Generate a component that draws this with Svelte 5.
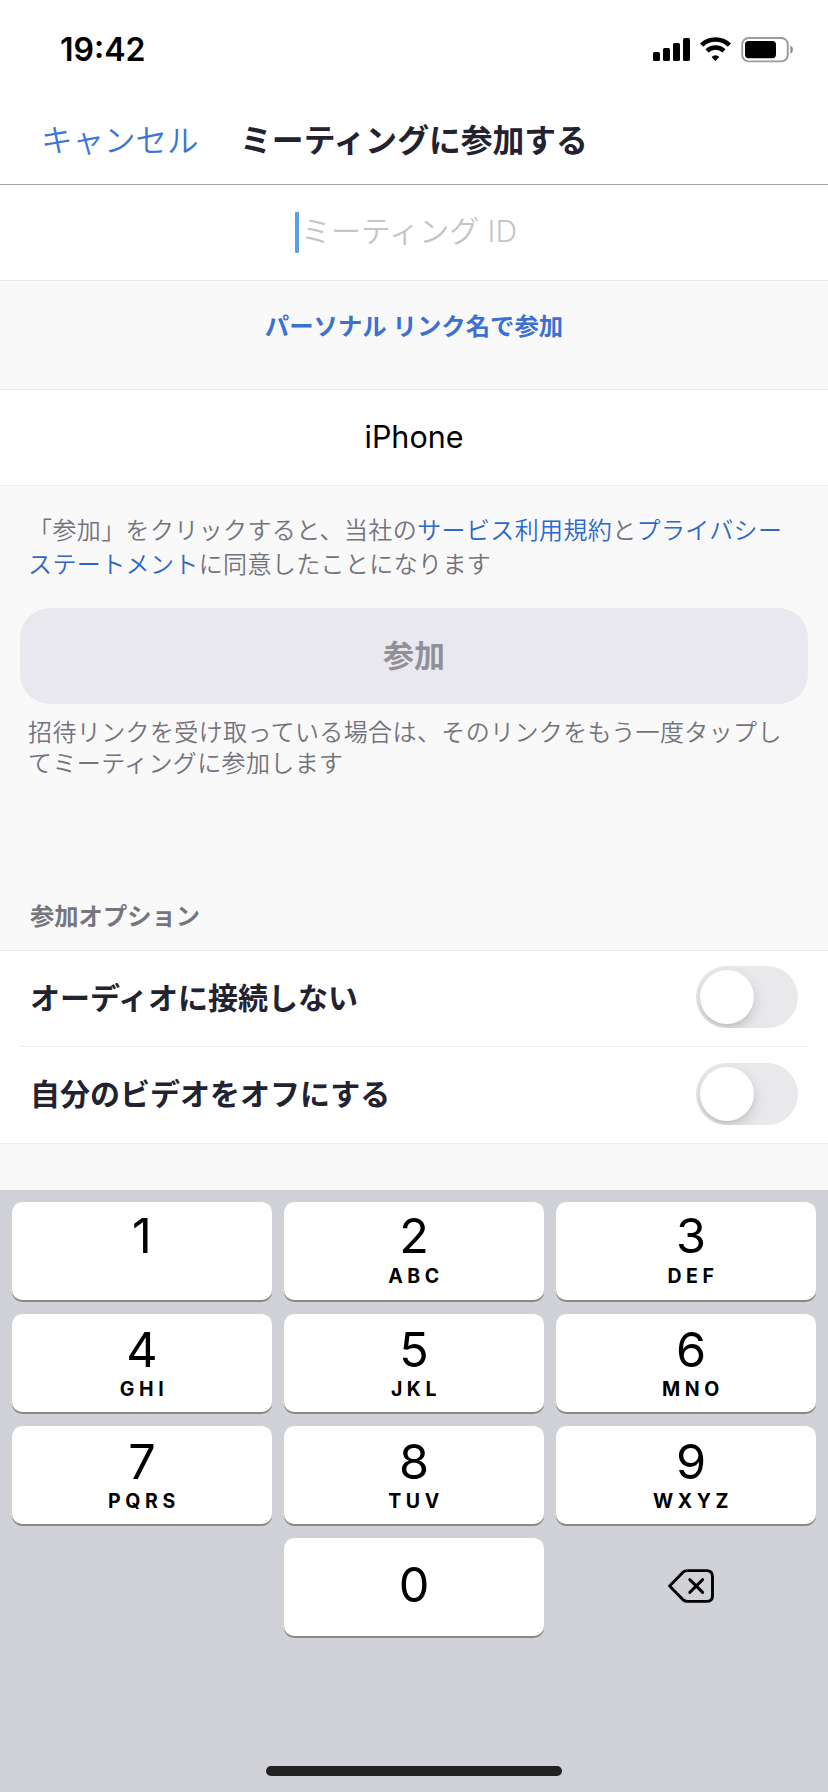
<script lang="ts">
  interface Key {
    digit: string;
    letters: string;
  }

  interface Option {
    label: string;
    enabled: boolean;
  }

  let meetingId = '';
  let displayName = 'iPhone';

  let options: Option[] = [
    { label: 'オーディオに接続しない', enabled: false },
    { label: '自分のビデオをオフにする', enabled: false }
  ];

  const rows: Key[][] = [
    [
      { digit: '1', letters: '' },
      { digit: '2', letters: 'ABC' },
      { digit: '3', letters: 'DEF' }
    ],
    [
      { digit: '4', letters: 'GHI' },
      { digit: '5', letters: 'JKL' },
      { digit: '6', letters: 'MNO' }
    ],
    [
      { digit: '7', letters: 'PQRS' },
      { digit: '8', letters: 'TUV' },
      { digit: '9', letters: 'WXYZ' }
    ]
  ];

  function press(digit: string) {
    meetingId = meetingId + digit;
  }

  function erase() {
    meetingId = meetingId.slice(0, -1);
  }

  function toggle(option: Option) {
    option.enabled = !option.enabled;
    options = options;
  }
</script>

<main>
  <div class="status-bar">
    <span class="time">19:42</span>
    <svg class="status-icons" width="142" height="26" viewBox="0 0 142 26">
      <!-- signal -->
      <rect x="0" y="15" width="7" height="9" rx="1.6" />
      <rect x="10" y="11" width="7" height="13" rx="1.6" />
      <rect x="20" y="6" width="7" height="18" rx="1.6" />
      <rect x="30" y="1" width="7" height="23" rx="1.6" />
      <!-- wifi -->
      <g fill="none" stroke="#000">
        <path d="M48.6 8.1a20 20 0 0 1 27.8 0" stroke-width="4.6" />
        <path d="M54 13.9a12.3 12.3 0 0 1 17 0" stroke-width="4.4" />
      </g>
      <path d="M62.5 24l-3.9-4.1a5.6 5.6 0 0 1 7.8 0z" />
      <!-- battery -->
      <rect x="89.2" y="1" width="45.6" height="23.4" rx="6.4" fill="none" stroke="#9b9b9b" stroke-width="1.9" />
      <rect x="92" y="4" width="31" height="17.2" rx="3.6" />
      <path d="M137.4 8.6c3.4 1.4 3.4 6.8 0 8.2z" fill="#8d8d8d" />
    </svg>
  </div>

  <header>
    <button class="cancel">キャンセル</button>
    <h1>ミーティングに参加する</h1>
  </header>

  <div class="field">
    <span class="caret"></span>
    {#if meetingId}
      <span class="value">{meetingId}</span>
    {:else}
      <span class="value placeholder">ミーティング ID</span>
    {/if}
  </div>

  <div class="personal-link">
    <button>パーソナル リンク名で参加</button>
  </div>

  <div class="field name">{displayName}</div>

  <section class="join">
    <p class="terms">「参加」をクリックすると、当社の<span class="link">サービス利用規約</span>と<span class="link">プライバシーステートメント</span>に同意したことになります</p>
    <button class="join-button" disabled>参加</button>
    <p class="hint">招待リンクを受け取っている場合は、そのリンクをもう一度タップしてミーティングに参加します</p>
  </section>

  <h2>参加オプション</h2>

  <div class="options">
    {#each options as option}
      <div class="option">
        <span class="label">{option.label}</span>
        <button
          class="switch"
          class:on={option.enabled}
          role="switch"
          aria-checked={option.enabled}
          aria-label={option.label}
          on:click={() => toggle(option)}
        >
          <span class="knob"></span>
        </button>
      </div>
    {/each}
  </div>

  <div class="keyboard">
    <div class="keys">
      {#each rows as row, i}
        {#each row as key, j}
          <button class="key" class:first={i === 0} class:right={j === 2} on:click={() => press(key.digit)}>
            <span class="digit">{key.digit}</span>
            <span class="letters">{key.letters}</span>
          </button>
        {/each}
      {/each}
      <span></span>
      <button class="key zero" on:click={() => press('0')}>
        <span class="digit">0</span>
      </button>
      <button class="backspace" aria-label="削除" on:click={erase}>
        <svg width="48" height="36" viewBox="0 0 48 36" fill="none" stroke="#000" stroke-width="2.9" stroke-linecap="round" stroke-linejoin="round">
          <path d="M2.6 18L15.8 4.4Q17.8 2.6 20.3 2.6H39.5Q45.5 2.6 45.5 8.6V27.4Q45.5 33.4 39.5 33.4H20.3Q17.8 33.4 15.8 31.6Z" />
          <path d="M22.8 11.6L35.6 24.4M35.6 11.6L22.8 24.4" />
        </svg>
      </button>
    </div>
    <div class="home-indicator"></div>
  </div>
</main>

<style>
  :global(body) {
    margin: 0;
    background-color: #f9f9f9;
  }

  main {
    display: flex;
    flex-direction: column;
    width: 828px;
    height: 1792px;
    overflow: hidden;
    background-color: #f9f9f9;
    font-family: Inter, 'Noto Sans CJK JP', sans-serif;
    color: #000000;
  }

  button {
    border: none;
    padding: 0;
    background: none;
    font-family: inherit;
    color: inherit;
    cursor: pointer;
  }

  h1, h2, p {
    margin: 0;
  }

  .status-bar {
    display: flex;
    justify-content: space-between;
    height: 63px;
    padding: 37px 33px 0 60px;
    box-sizing: border-box;
    background-color: #ffffff;
  }

  .time {
    font-size: 32px;
    line-height: 26px;
    font-weight: 600;
  }

  header {
    display: grid;
    grid-template-columns: 1fr auto 1fr;
    align-items: center;
    height: 122px;
    padding: 34px 41px 0;
    box-sizing: border-box;
    background-color: #ffffff;
    border-bottom: 1px solid #a2a1a6;
  }

  .cancel {
    justify-self: start;
    font-size: 31.5px;
    line-height: 40px;
    color: #3b76d6;
    font-weight: 350;
  }

  h1 {
    font-size: 31.8px;
    line-height: 40px;
    font-weight: 700;
    color: #232230;
  }

  .field {
    display: flex;
    align-items: center;
    justify-content: center;
    height: 96px;
    padding-bottom: 1px;
    box-sizing: border-box;
    background-color: #ffffff;
    border-bottom: 1px solid #ebebec;
    font-size: 30px;
  }

  .name {
    height: 97px;
    padding-bottom: 3px;
    border-top: 1px solid #ebebec;
    font-size: 30.5px;
  }

  .caret {
    width: 4px;
    height: 41px;
    margin: 0 2px 0 -16px;
    border-radius: 1px;
    background-color: #5ca0e8;
  }

  .value {
    padding-bottom: 6px;
  }

  .placeholder {
    color: #c5c5c7;
    font-weight: 350;
  }

  .personal-link {
    display: flex;
    justify-content: center;
    align-items: flex-start;
    height: 108px;
    padding-top: 27px;
    box-sizing: border-box;
  }

  .personal-link button {
    font-size: 24.4px;
    line-height: 36px;
    font-weight: 700;
    color: #3a71d2;
  }

  .join {
    display: flex;
    flex-direction: column;
    height: 410px;
    padding: 28px 20px 0;
    box-sizing: border-box;
  }

  .terms,
  .hint {
    padding: 0 8px;
    font-size: 24px;
    letter-spacing: 0.38px;
    font-weight: 350;
    color: #74737b;
  }

  .terms {
    line-height: 34px;
  }

  .hint {
    margin-top: 13px;
    line-height: 31px;
  }

  .link {
    color: #2d67c8;
  }

  .join-button {
    height: 96px;
    margin-top: 26px;
    padding-bottom: 5px;
    border-radius: 30px;
    background-color: #e9e8ee;
    font-size: 31px;
    font-weight: 700;
    color: #919096;
  }

  h2 {
    height: 52px;
    padding: 2px 0 0 30px;
    font-size: 24.3px;
    line-height: 36px;
    font-weight: 700;
    color: #77767d;
  }

  .options {
    background-color: #ffffff;
    border-top: 1px solid #ebebec;
    border-bottom: 1px solid #ebebec;
  }

  .option {
    display: flex;
    align-items: center;
    justify-content: space-between;
    height: 95px;
    margin: 0 20px;
    padding: 0 10px 3px;
    box-sizing: border-box;
    font-size: 30px;
    font-weight: 700;
    color: #232230;
  }

  .option + .option {
    height: 97px;
    border-top: 1px solid #ebebec;
  }

  .label {
    padding-bottom: 3px;
  }

  .switch {
    width: 102px;
    height: 62px;
    padding: 4px;
    border-radius: 31px;
    background-color: #e9e9eb;
    overflow: hidden;
  }

  .switch.on {
    background-color: #34c759;
  }

  .knob {
    display: block;
    width: 54px;
    height: 54px;
    border-radius: 50%;
    background-color: #ffffff;
    box-shadow: 0 6px 14px rgba(0, 0, 0, 0.15), 0 2px 3px rgba(0, 0, 0, 0.05);
  }

  .switch.on .knob {
    margin-left: 40px;
  }

  .keyboard {
    display: flex;
    flex-direction: column;
    justify-content: space-between;
    align-items: center;
    height: 602px;
    margin-top: auto;
    padding: 12px 12px 16px;
    box-sizing: border-box;
    background-color: #d1d2d8;
  }

  .keys {
    display: grid;
    grid-template-columns: repeat(3, 260px);
    grid-auto-rows: 98px;
    gap: 14px 12px;
  }

  .key {
    display: flex;
    flex-direction: column;
    align-items: center;
    padding-top: 11px;
    border-radius: 10px;
    background-color: #ffffff;
    box-shadow: 0 2px 0 #88898d;
  }

  .key.first {
    padding-top: 9px;
  }

  .key.right {
    padding-left: 10px;
  }

  .key.zero {
    padding-top: 22px;
  }

  .digit {
    font-size: 48.6px;
    line-height: 50px;
    font-weight: 400;
  }

  .letters {
    margin-top: 2px;
    padding-left: 4px;
    font-size: 19.5px;
    line-height: 24px;
    font-weight: 700;
    letter-spacing: 4.6px;
  }

  .first .letters {
    margin-top: 3px;
  }

  .backspace {
    display: flex;
    align-items: center;
    justify-content: center;
    padding: 0 0 3px 10px;
  }

  .home-indicator {
    width: 296px;
    height: 10px;
    border-radius: 5px;
    background-color: #222222;
  }
</style>
